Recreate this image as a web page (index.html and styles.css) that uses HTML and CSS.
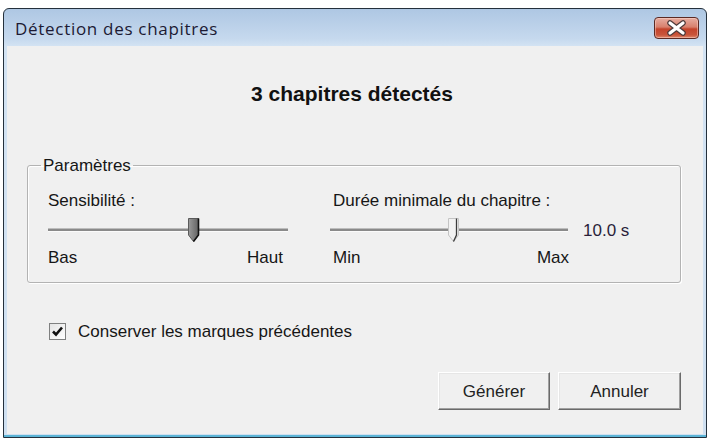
FILE: index.html
```html
<!DOCTYPE html>
<html lang="fr">
<head>
<meta charset="utf-8">
<title>Détection des chapitres</title>
<link rel="stylesheet" href="styles.css">
</head>
<body>
<div class="window">
  <div class="titlebar">
    <span class="title">Détection des chapitres</span>
    <button class="close" aria-label="Fermer">
      <svg width="43" height="20" viewBox="0 0 43 20">
        <path d="M15 5 L28 15 M28 5 L15 15" stroke="#4d3a3a" stroke-width="5.5" stroke-linecap="round" fill="none"/>
        <path d="M15 5 L28 15 M28 5 L15 15" stroke="#ffffff" stroke-width="3.2" stroke-linecap="round" fill="none"/>
      </svg>
    </button>
  </div>
  <div class="client">
    <h1 class="heading">3 chapitres détectés</h1>
    <fieldset class="group">
      <legend>Paramètres</legend>
      <div class="cols">
        <div class="col col-left">
          <div class="label">Sensibilité :</div>
          <div class="slider">
            <div class="track"></div>
            <svg class="thumb" style="left:140px" width="12" height="24" viewBox="0 0 12 24">
              <defs>
                <linearGradient id="gd" x1="0" y1="0" x2="1" y2="0">
                  <stop offset="0" stop-color="#9a9a9a"/>
                  <stop offset="1" stop-color="#626262"/>
                </linearGradient>
              </defs>
              <polygon points="0.5,0.5 10.5,0.5 10.5,17 5.5,23.5 0.5,17" fill="url(#gd)" stroke="#5a5a5a"/>
              <path d="M10.5 0.5 L10.5 17 L5.5 23.5" stroke="#111" stroke-width="1.6" fill="none"/>
            </svg>
          </div>
          <div class="ends"><span>Bas</span><span>Haut</span></div>
        </div>
        <div class="col col-right">
          <div class="label">Durée minimale du chapitre :</div>
          <div class="slider-row">
            <div class="slider">
              <div class="track"></div>
              <svg class="thumb" style="left:118px" width="12" height="24" viewBox="0 0 12 24">
                <polygon points="0.5,0.5 10.5,0.5 10.5,17 5.5,23.5 0.5,17" fill="#f2f2f2" stroke="#c4c4c4"/>
                <path d="M8.5 0.5 L8.5 17 L5.5 23.5" stroke="#3c3c3c" stroke-width="1.3" fill="none"/>
              </svg>
            </div>
            <span class="value">10.0 s</span>
          </div>
          <div class="ends"><span>Min</span><span>Max</span></div>
        </div>
      </div>
    </fieldset>
    <label class="check">
      <span class="box">
        <svg width="15" height="15" viewBox="0 0 15 15"><path d="M3 7.5 L6 10.5 L12 3.5" stroke="#111" stroke-width="2.6" fill="none"/></svg>
      </span>
      <span>Conserver les marques précédentes</span>
    </label>
    <div class="buttons">
      <button class="btn btn-gen">Générer</button>
      <button class="btn btn-cancel">Annuler</button>
    </div>
  </div>
</div>
</body>
</html>
```
FILE: styles.css
```css
body {
  margin: 0;
  background: #ffffff;
  font-family: "Liberation Sans", Arial, sans-serif;
  color: #161616;
}

.window {
  margin: 8px 0 0 3px;
  width: 704px;
  height: 430px;
  box-sizing: border-box;
  border: 1px solid #24303c;
  border-radius: 6px 6px 0 0;
  background: linear-gradient(#aec7e3 0, #c6d9ee 30px, #d3e3f3 37px, #cfe0f1 100%);
  box-shadow: inset 0 -2px 0 #5bb4d6;
  display: flex;
  flex-direction: column;
}

.titlebar {
  height: 37px;
  box-sizing: border-box;
  padding: 8px 7px 0 11px;
  display: flex;
  justify-content: space-between;
  align-items: flex-start;
}

.title {
  font-family: "Open Sans", "Liberation Sans", sans-serif;
  font-size: 17px;
  line-height: 23px;
  letter-spacing: 0.7px;
  color: #1c1a33;
}

.close {
  width: 45px;
  height: 22px;
  padding: 0;
  border: 1px solid #5b2a24;
  border-radius: 4px;
  background: linear-gradient(#e6ada1 0, #d8806d 45%, #c4432b 55%, #c9553b 85%, #e08a6e 100%);
  box-shadow: inset 0 0 0 1px rgba(255, 220, 210, 0.45);
  display: flex;
  align-items: center;
  justify-content: center;
}

.close svg {
  display: block;
}

.client {
  flex: 1;
  margin: 0 3px 3px;
  background: #f0f0f0;
  display: flex;
  flex-direction: column;
}

.heading {
  margin: 36px 0 0;
  padding-right: 6px;
  text-align: center;
  font-size: 21px;
  line-height: 24px;
  font-weight: bold;
  color: #111;
}

.group {
  margin: 50px 22px 0 20px;
  padding: 16px 0 15px;
  border: 1px solid #b3b3b3;
  border-radius: 3px;
  box-shadow: 1px 1px 0 #ffffff, inset 1px 1px 0 #ffffff;
  min-width: 0;
}

.group legend {
  margin-left: 13px;
  padding: 0 2px;
  font-size: 17px;
  line-height: 19px;
}

.cols {
  display: flex;
  gap: 42px;
  padding: 0 20px;
}

.col-left {
  width: 240px;
}

.label {
  font-size: 17px;
  line-height: 19px;
}

.col-right .label {
  padding-left: 3px;
}

.slider {
  position: relative;
  width: 240px;
  height: 24px;
  box-sizing: border-box;
  padding-top: 10px;
  margin-top: 8px;
}

.track {
  height: 2px;
  background: #8a8a8a;
  border-top: 1px solid #bdbdbd;
  border-bottom: 1px solid #fbfbfb;
}

.thumb {
  position: absolute;
  top: 0;
  display: block;
}

.slider-row {
  display: flex;
  align-items: center;
  margin-top: 8px;
}

.slider-row .slider {
  width: 238px;
  margin-top: 0;
}

.value {
  margin-left: 15px;
  font-size: 17px;
  line-height: 19px;
  color: #2a1f3a;
}

.ends {
  display: flex;
  justify-content: space-between;
  margin-top: 6px;
  font-size: 17px;
  line-height: 19px;
}

.col-left .ends {
  padding-right: 5px;
}

.col-right .ends {
  width: 239px;
  box-sizing: border-box;
  padding-left: 3px;
}

.check {
  display: flex;
  align-items: center;
  gap: 12px;
  margin: 39px 0 0 42px;
  font-size: 17px;
  line-height: 19px;
}

.box {
  width: 17px;
  height: 17px;
  box-sizing: border-box;
  border: 1px solid #7f8080;
  background: linear-gradient(135deg, #e4e4e4, #ffffff);
  display: flex;
  align-items: center;
  justify-content: center;
}

.box svg {
  display: block;
}

.buttons {
  display: flex;
  justify-content: flex-end;
  gap: 8px;
  margin: 31px 22px 0 0;
}

.btn {
  height: 38px;
  padding: 2px 0 0;
  font-family: "Liberation Sans", Arial, sans-serif;
  font-size: 17px;
  color: #222;
  background: #f0f0f0;
  border: 1px solid;
  border-color: #ffffff #6a6a6a #6a6a6a #ffffff;
  box-shadow: inset -1px -1px 0 #a0a0a0, inset 1px 1px 0 #e6e6e6;
}

.btn-gen {
  width: 112px;
}

.btn-cancel {
  width: 123px;
}
```
